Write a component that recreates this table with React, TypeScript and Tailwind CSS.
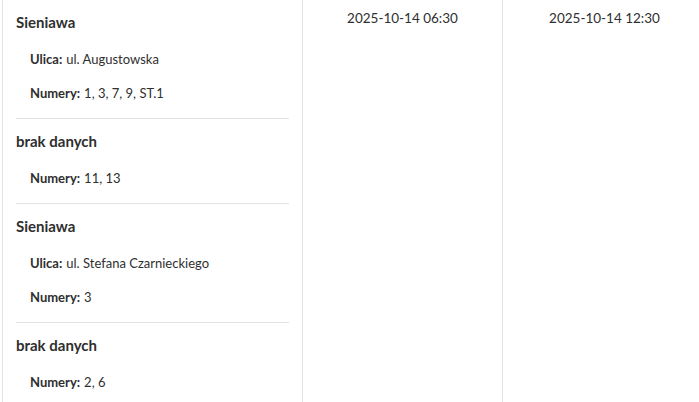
import React from 'react';

type Entry = {
  place: string;
  street?: string;
  numbers: string;
};

const entries: Entry[] = [
  { place: 'Sieniawa', street: 'ul. Augustowska', numbers: '1, 3, 7, 9, ST.1' },
  { place: 'brak danych', numbers: '11, 13' },
  { place: 'Sieniawa', street: 'ul. Stefana Czarnieckiego', numbers: '3' },
  { place: 'brak danych', numbers: '2, 6' },
];

function Line({ label, value }: { label: string; value: string }) {
  return (
    <div className="h-[34px] flex items-center pl-[14px] text-[13px]">
      <span className="font-bold mr-1">{label}</span>
      <span>{value}</span>
    </div>
  );
}

export default function App() {
  return (
    <div className="w-[699px] h-[402px] overflow-hidden bg-white text-[#2f2f2f] font-['Lato','Liberation_Sans',sans-serif]">
      <div className="ml-[2px] flex h-full w-[720px]">
        {/* Area column */}
        <div className="w-[301px] shrink-0 border-l border-r border-[#e3e3e3] px-[13px]">
          {entries.map((e, i) => (
            <div key={i} className="pt-[11px] pb-[7px] border-b border-[#e3e3e3]">
              <div className="h-[22px] leading-[22px] text-[15px] font-bold mb-[10px]">{e.place}</div>
              {e.street && <Line label="Ulica:" value={e.street} />}
              <Line label="Numery:" value={e.numbers} />
            </div>
          ))}
        </div>

        {/* From */}
        <div className="w-[200px] shrink-0 border-r border-[#e3e3e3] text-center pt-[8px] text-[13.5px] leading-5">
          2025-10-14 06:30
        </div>

        {/* To */}
        <div className="w-[204px] shrink-0 border-r border-[#e3e3e3] text-center pt-[8px] text-[13.5px] leading-5">
          2025-10-14 12:30
        </div>
      </div>
    </div>
  );
}
